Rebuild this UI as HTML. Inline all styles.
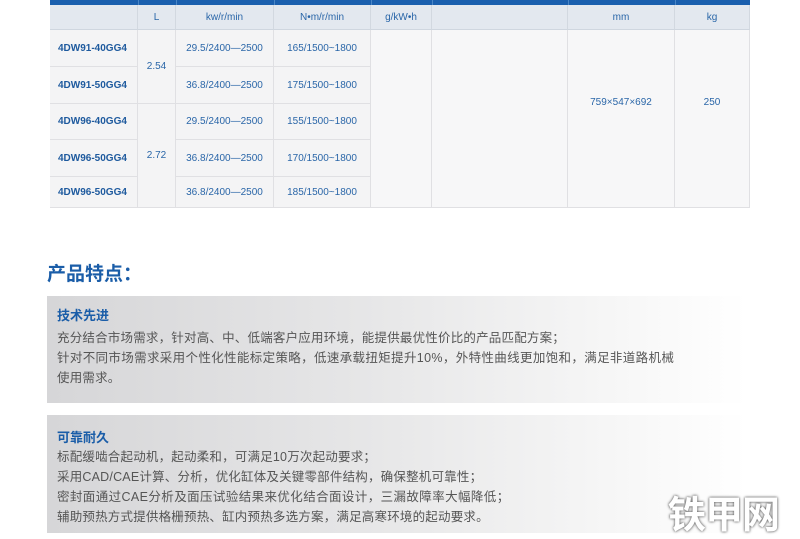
<!DOCTYPE html>
<html><head><meta charset="utf-8"><style>
*{margin:0;padding:0;box-sizing:border-box}
body{width:800px;height:533px;background:#fff;position:relative;overflow:hidden;font-family:"Liberation Sans","Noto Sans CJK SC",sans-serif}
.a{position:absolute}
.c{position:absolute;display:flex;align-items:center;justify-content:center;font-size:10px;color:#2a66a8;background:#f4f4f5;border-right:1px solid #e0e0e3;border-bottom:1px solid #e0e0e3}
.h{background:#e3e8ef;border-bottom:1px solid #cfd6df;border-right:1px solid #d2d8e0}
.m{font-weight:bold;color:#1e5a9e;justify-content:flex-start;padding-left:8px}
.box{position:absolute;left:47px;width:700px;background:linear-gradient(90deg,#d6d6d8 0%,#e6e6e7 45%,#f6f6f6 80%,#fff 100%)}
.box .t{position:absolute;left:10px;font-size:13px;font-weight:bold;color:#1a5da8}
.box .l{position:absolute;left:10px;font-size:12.5px;color:#555;white-space:nowrap;letter-spacing:0.2px}
</style></head><body>
<div class="a" style="left:50px;top:0;width:700px;height:5px;background:#1a5fae"></div>
<div class="a" style="left:138px;top:0;width:1px;height:5px;background:#4a86c6"></div>
<div class="a" style="left:176px;top:0;width:1px;height:5px;background:#4a86c6"></div>
<div class="a" style="left:274px;top:0;width:1px;height:5px;background:#4a86c6"></div>
<div class="a" style="left:371px;top:0;width:1px;height:5px;background:#4a86c6"></div>
<div class="a" style="left:432px;top:0;width:1px;height:5px;background:#4a86c6"></div>
<div class="a" style="left:568px;top:0;width:1px;height:5px;background:#4a86c6"></div>
<div class="a" style="left:675px;top:0;width:1px;height:5px;background:#4a86c6"></div>

<div class="c h" style="left:50px;top:5px;width:88px;height:25px"></div>
<div class="c h" style="left:138px;top:5px;width:38px;height:25px">L</div>
<div class="c h" style="left:176px;top:5px;width:98px;height:25px">kw/r/min</div>
<div class="c h" style="left:274px;top:5px;width:97px;height:25px">N•m/r/min</div>
<div class="c h" style="left:371px;top:5px;width:61px;height:25px">g/kW•h</div>
<div class="c h" style="left:432px;top:5px;width:136px;height:25px"></div>
<div class="c h" style="left:568px;top:5px;width:107px;height:25px">mm</div>
<div class="c h" style="left:675px;top:5px;width:75px;height:25px">kg</div>

<div class="c m" style="left:50px;top:30px;width:88px;height:37px">4DW91-40GG4</div>
<div class="c m" style="left:50px;top:67px;width:88px;height:37px">4DW91-50GG4</div>
<div class="c m" style="left:50px;top:104px;width:88px;height:36px">4DW96-40GG4</div>
<div class="c m" style="left:50px;top:140px;width:88px;height:37px">4DW96-50GG4</div>
<div class="c m" style="left:50px;top:177px;width:88px;height:31px">4DW96-50GG4</div>
<div class="c" style="left:138px;top:30px;width:38px;height:74px">2.54</div>
<div class="c" style="left:138px;top:104px;width:38px;height:104px">2.72</div>
<div class="c" style="left:176px;top:30px;width:98px;height:37px">29.5/2400—2500</div>
<div class="c" style="left:176px;top:67px;width:98px;height:37px">36.8/2400—2500</div>
<div class="c" style="left:176px;top:104px;width:98px;height:36px">29.5/2400—2500</div>
<div class="c" style="left:176px;top:140px;width:98px;height:37px">36.8/2400—2500</div>
<div class="c" style="left:176px;top:177px;width:98px;height:31px">36.8/2400—2500</div>
<div class="c" style="left:274px;top:30px;width:97px;height:37px">165/1500~1800</div>
<div class="c" style="left:274px;top:67px;width:97px;height:37px">175/1500~1800</div>
<div class="c" style="left:274px;top:104px;width:97px;height:36px">155/1500~1800</div>
<div class="c" style="left:274px;top:140px;width:97px;height:37px">170/1500~1800</div>
<div class="c" style="left:274px;top:177px;width:97px;height:31px">185/1500~1800</div>
<div class="c" style="left:371px;top:30px;width:61px;height:178px;background:#f7f7f8"></div>
<div class="c" style="left:432px;top:30px;width:136px;height:178px;background:#f7f7f8"></div>
<div class="c" style="left:568px;top:30px;width:107px;height:178px;background:#f7f7f8;align-items:flex-start;padding-top:67px">759×547×692</div>
<div class="c" style="left:675px;top:30px;width:75px;height:178px;background:#f7f7f8;align-items:flex-start;padding-top:67px">250</div>

<div class="a" style="left:47px;top:259px;font-size:19px;font-weight:bold;color:#1a5da8">产品特点：</div>

<div class="box" style="top:296px;height:107px">
<div class="t" style="top:9px">技术先进</div>
<div class="l" style="top:31px">充分结合市场需求，针对高、中、低端客户应用环境，能提供最优性价比的产品匹配方案；</div>
<div class="l" style="top:51px;letter-spacing:0.35px">针对不同市场需求采用个性化性能标定策略，低速承载扭矩提升10%，外特性曲线更加饱和，满足非道路机械</div>
<div class="l" style="top:71px">使用需求。</div>
</div>
<div class="box" style="top:415px;height:118px">
<div class="t" style="top:12px">可靠耐久</div>
<div class="l" style="top:31px;letter-spacing:0.2px">标配缓啮合起动机，起动柔和，可满足10万次起动要求；</div>
<div class="l" style="top:51px">采用CAD/CAE计算、分析，优化缸体及关键零部件结构，确保整机可靠性；</div>
<div class="l" style="top:71px;letter-spacing:0.4px">密封面通过CAE分析及面压试验结果来优化结合面设计，三漏故障率大幅降低；</div>
<div class="l" style="top:91px;letter-spacing:0.2px">辅助预热方式提供格栅预热、缸内预热多选方案，满足高寒环境的起动要求。</div>
</div>
<div class="a" style="left:668px;top:484px;font-size:38px;font-weight:bold;color:#fff;letter-spacing:-1px;text-shadow:0 0 2px #666,0 0 3px #888;font-family:'Noto Sans CJK SC',sans-serif">铁甲网</div>
</body></html>
